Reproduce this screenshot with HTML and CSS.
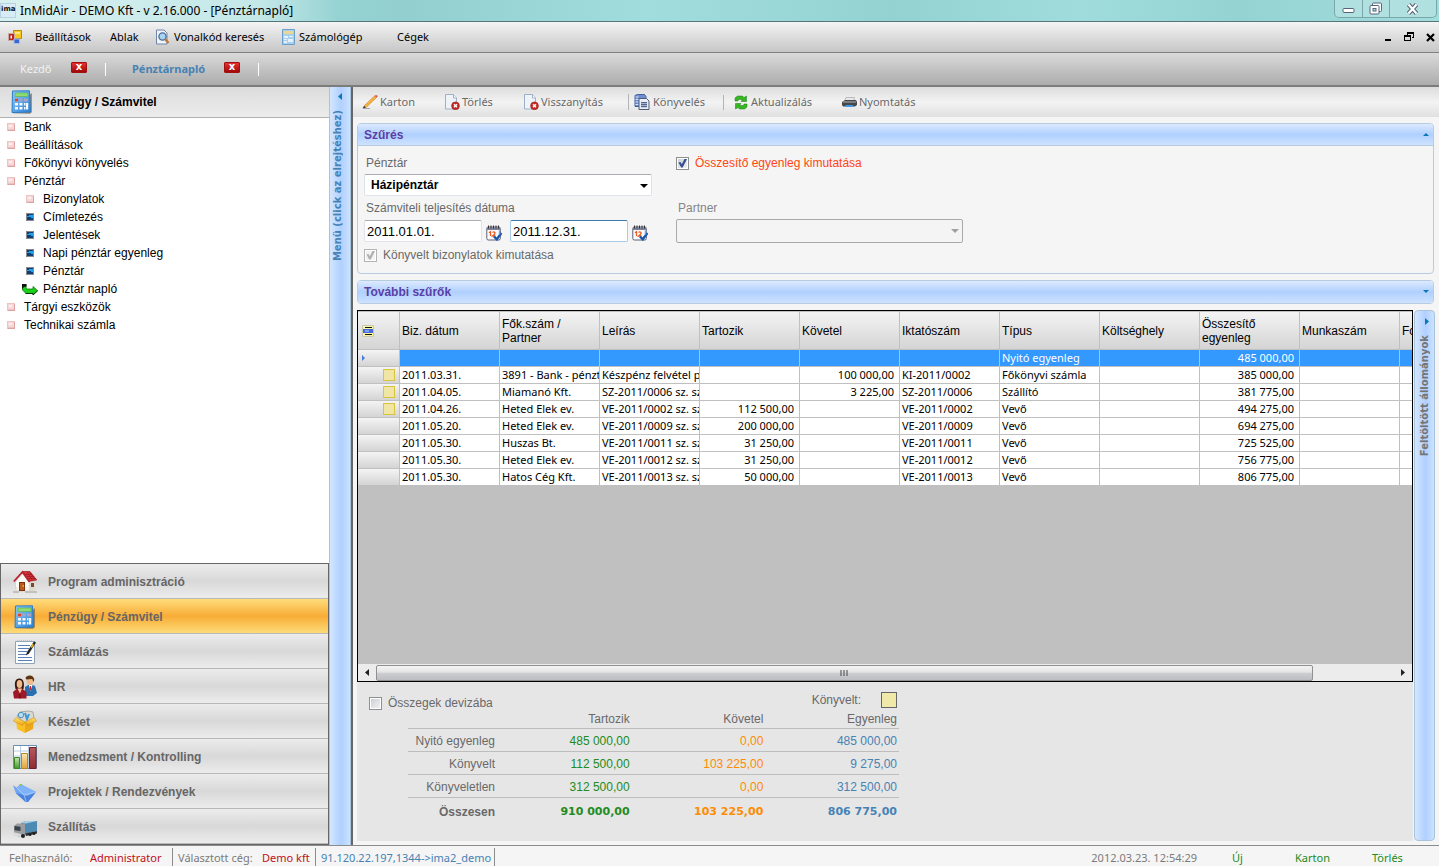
FILE: index.html
```
<!DOCTYPE html>
<html lang="hu">
<head>
<meta charset="utf-8">
<title>InMidAir - DEMO Kft - v 2.16.000 - [Pénztárnapló]</title>
<link rel="stylesheet" href="styles.css">
</head>
<body>
<svg class="defs" aria-hidden="true">
  <defs>
    <linearGradient id="blue" x1="0" y1="0" x2="1" y2="1"><stop offset="0" stop-color="#8accf8"/><stop offset="1" stop-color="#2a80d8"/></linearGradient>
    <linearGradient id="gold" x1="0" y1="0" x2="0" y2="1"><stop offset="0" stop-color="#ffe36a"/><stop offset="1" stop-color="#f0a010"/></linearGradient>
    <linearGradient id="green" x1="0" y1="0" x2="0" y2="1"><stop offset="0" stop-color="#c4e6a8"/><stop offset="1" stop-color="#3f9a2c"/></linearGradient>
    <linearGradient id="amber" x1="0" y1="0" x2="0" y2="1"><stop offset="0" stop-color="#fbe7ae"/><stop offset="1" stop-color="#e0a23c"/></linearGradient>
    <linearGradient id="wine" x1="0" y1="0" x2="0" y2="1"><stop offset="0" stop-color="#b9585c"/><stop offset="1" stop-color="#8e2c30"/></linearGradient>
    <symbol id="i-calc" viewBox="0 0 24 24">
      <path d="M3 23.200 20 23.800l1.800-1.500V3z" fill="#5f5a50" opacity=".7"/>
      <path d="M2.500 1 19.500.8 20.400 22 2 22.600z" fill="url(#blue)" stroke="#2f7cc4"/>
      <path d="M5 3h13v3.500H5z" fill="#8fdc72" stroke="#5cae4c" stroke-width=".6"/>
      <path d="M5 8.500h3v3H5zM5 13h3v2.500H5zM5 17h3v2.500H5zM9.500 13h3v2.500h-3zM9.500 17h3v2.500h-3zM14 13h1.500v2.500H14zM14 17h1.500v2.500H14zM16 13h2.200v6.500H16z" fill="#f6faff"/>
      <path d="M5 8.500h3v3H5z" fill="#e0432c"/><path d="M9.500 8.500h3v3h-3zM14 8.500h4v3h-4z" fill="#a9a4c4"/>
    </symbol>
    <symbol id="i-doc-x" viewBox="0 0 16 16">
      <path d="M1.500.5h8L12.500 4v11h-11z" fill="#eef3fa" stroke="#9db0c8"/><path d="M9.500.5V4h3" fill="#fff" stroke="#9db0c8"/>
      <circle cx="11.500" cy="11.800" r="3.900" fill="#c92a26" stroke="#8c1512" stroke-width=".6"/>
      <path d="M10 10.300l3 3M13 10.300l-3 3" stroke="#fff" stroke-width="1.400"/>
    </symbol>
    <symbol id="i-cal" viewBox="0 0 16 16">
      <rect x=".8" y="2" width="13.500" height="13" rx="1.500" fill="#fafbff" stroke="#5c6078"/>
      <path d="M1 2.500h13V5H1z" fill="#80849a"/>
      <path d="M2.500.5v3M5 .5v3M7.500.5v3M10 .5v3M12.500.5v3" stroke="#333" stroke-width="1"/>
      <path d="M3 7.800 4.500 6.800V11M6.500 7.500c1.500-1.500 3.500 0 2 1.700L6.500 11H9.500" fill="none" stroke="#ec5a1c" stroke-width="1.300"/>
      <path d="M8 11.500l2.800 2.800L15.500 8" fill="none" stroke="#1c56a8" stroke-width="2.400"/>
      <path d="M13.500 5.500v4" stroke="#7ea2da" stroke-width="1.500"/>
    </symbol>
    <symbol id="i-node" viewBox="0 0 8 8"><path d="M0 0h8v8H0z" fill="#ecc4c4"/><path d="M1 1h6v5H1z" fill="#f6d8d8"/><path d="M2 2h3v2H2z" fill="#fdf0f0"/><path d="M7 1h1v7H1V7h6z" fill="#dfa3a3"/></symbol>
    <symbol id="i-leaf" viewBox="0 0 8 8"><path d="M0 0h8v8H0z" fill="#8a8a8a"/><path d="M1 1h6v6H1z" fill="#0e3f78"/><path d="M1 3h2V2h4v3H5V4H1z" fill="#22a0e8"/></symbol>
  </defs>
</svg>

<div class="app">
  <header class="titlebar">
    <span class="logo">ima</span>
    <h1 class="title">InMidAir - DEMO Kft - v 2.16.000 - [Pénztárnapló]</h1>
    <div class="winbtns">
      <button aria-label="Kis méret"><svg width="14" height="12"><rect x="1" y="5.500" width="11" height="4" rx="1" fill="#fff" stroke="#57657a"/></svg></button>
      <button aria-label="Előző méret"><svg width="14" height="14"><rect x="3.500" y="1" width="9" height="8.500" rx="1" fill="#fff" stroke="#57657a"/><rect x="1" y="3.500" width="9" height="8.500" rx="1" fill="#fff" stroke="#57657a"/><rect x="4" y="6.500" width="3" height="2.500" fill="#a5dcdc" stroke="#57657a"/></svg></button>
      <button class="wide" aria-label="Bezárás"><svg width="14" height="12"><path d="M2.500 1.500 6.500 6l4-4.500M2.500 10.500 6.500 6l4 4.500" fill="none" stroke="#57657a" stroke-width="4.400"/><path d="M2.500 1.500 6.500 6l4-4.500M2.500 10.500 6.500 6l4 4.500" fill="none" stroke="#fff" stroke-width="2.200"/></svg></button>
    </div>
  </header>

  <nav class="menubar" aria-label="Főmenü">
    <svg width="14" height="14" viewBox="0 0 14 14"><path d="M5.500.5h8v8h-8z" fill="#f6c81c" stroke="#b88a10"/><path d="M7 2h5v2H7z" fill="#fce88c"/><path d="M.5 3.500h6v7h-6z" fill="#c0241a" stroke="#c8a8a0"/><path d="M2.500 5.500H4v3H2.500z" fill="#fff"/><path d="M6 9h5.500v4.500H6z" fill="#3868d0" stroke="#a8bcec"/></svg>
    <button>Beállítások</button>
    <button>Ablak</button>
    <button><svg width="15" height="16" viewBox="0 0 15 16"><path d="M1.500 1H9l3 3v11H1.500z" fill="#f0f5fc" stroke="#6f86a8"/><circle cx="7.500" cy="7.500" r="3.600" fill="#a8d4f4" stroke="#4a6a98" stroke-width="1.300"/><path d="M10 10l3.500 4" stroke="#c07a38" stroke-width="2.400"/></svg>Vonalkód keresés</button>
    <button><svg width="13" height="16" viewBox="0 0 13 16"><path d="M.5.500h12v15H.5z" fill="#a8d0ee" stroke="#6ba0cc"/><path d="M2 2h9v3H2z" fill="#e8d898"/><path d="M2 7h4v2H2zM7 7h4v1H7zM2 10h3v1H2zM6 10h5v3H6zM2 12h3v2H2z" fill="#e4f2fc"/></svg>Számológép</button>
    <button>Cégek</button>
    <div class="mdi">
      <button aria-label="Ablak kis méret"><svg width="8" height="10"><path d="M1 7h6v2H1z"/></svg></button>
      <button aria-label="Ablak visszaállítása"><svg width="10" height="10"><path d="M3 0h7v6H8V5h1V2H4v1H3zM0 3h7v6H0zm1 2v3h5V5z" fill-rule="evenodd"/></svg></button>
      <button aria-label="Ablak bezárása"><svg width="9" height="9"><path d="M1 1l7 7M8 1L1 8" stroke="#000" stroke-width="2.200"/></svg></button>
    </div>
  </nav>

  <div class="tabs">
    <button class="tab">Kezdő</button><button class="x" aria-label="Kezdő bezárása">x</button><i></i>
    <button class="tab active">Pénztárnapló</button><button class="x" aria-label="Pénztárnapló bezárása">x</button><i></i>
  </div>

  <div class="main">
    <aside class="sidebar">
      <h2 class="side-head"><svg width="24" height="24"><use href="#i-calc"/></svg>Pénzügy / Számvitel</h2>
      <ul class="tree">
        <li><svg width="8" height="8"><use href="#i-node"/></svg>Bank</li>
        <li><svg width="8" height="8"><use href="#i-node"/></svg>Beállítások</li>
        <li><svg width="8" height="8"><use href="#i-node"/></svg>Főkönyvi könyvelés</li>
        <li><svg width="8" height="8"><use href="#i-node"/></svg>Pénztár</li>
        <li class="sub"><svg width="8" height="8"><use href="#i-node"/></svg>Bizonylatok</li>
        <li class="sub"><svg width="8" height="8"><use href="#i-leaf"/></svg>Címletezés</li>
        <li class="sub"><svg width="8" height="8"><use href="#i-leaf"/></svg>Jelentések</li>
        <li class="sub"><svg width="8" height="8"><use href="#i-leaf"/></svg>Napi pénztár egyenleg</li>
        <li class="sub"><svg width="8" height="8"><use href="#i-leaf"/></svg>Pénztár</li>
        <li class="sub"><svg width="16" height="13" viewBox="0 0 16 13"><path d="M.5 1.500H4V5l1.500 1H11V3.500l4.500 4-4.500 4v-1H4L.5 7z" fill="#18d018" stroke="#0a7c0a" stroke-width=".8"/><path d="M0 1h4.500v2.500L2 4 0 6z" fill="#111"/><path d="M3.500 10.500H11V12l4.800-4.300" fill="none" stroke="#063806"/></svg>Pénztár napló</li>
        <li><svg width="8" height="8"><use href="#i-node"/></svg>Tárgyi eszközök</li>
        <li><svg width="8" height="8"><use href="#i-node"/></svg>Technikai számla</li>
      </ul>
      <nav class="modules" aria-label="Modulok">
        <button><svg width="24" height="24" viewBox="0 0 24 24"><path d="M3 11h17v10H3z" fill="#f8f5ee" stroke="#c8c4bc" stroke-width=".6"/><path d="M3 12l6.500-7.500 6 7.500v5H3z" fill="#fbf9f4"/><path d="M16 11l2-2 4 2v10h-6z" fill="#dedad2"/><path d="M6 12h6v9H6z" fill="#7a3210"/><path d="M7 13h4v7H7z" fill="#b85a18"/><circle cx="10.200" cy="16" r=".8" fill="#ffd840"/><path d="M18 13h3v4h-3z" fill="#7a4a2c"/><path d="M9.500 1.500H17L23.800 10l-7 1.200z" fill="#d83038" stroke="#8c1418" stroke-width=".6"/><path d="M.8 11.500 9.500 2 16.500 12" fill="none" stroke="#b8222a" stroke-width="1.800"/><path d="M12 4.500h7M14 6.500h7M15.500 8.500h7M14 1.500l5.500 9M16.500 2l6 8" stroke="#901820" stroke-width=".6"/><path d="M0 21h6v2H0zM12 21h12v2H12z" fill="#c4c0ba"/></svg>Program adminisztráció</button>
        <button class="on"><svg width="24" height="24"><use href="#i-calc"/></svg>Pénzügy / Számvitel</button>
        <button><svg width="24" height="24" viewBox="0 0 24 24"><path d="M2.500 1.500h19v22h-19z" fill="#fbfdff" stroke="#8fa3b8"/><path d="M4 .8h16" stroke="#b0b8c0" stroke-dasharray="1 1"/><path d="M5 5.500h12M5 8.500h11M5 11.500h9M5 14.500h9M5 17.500h14M5 20.500h14" stroke="#5b80bc"/><path d="M13 15.500l1-3.500L21 1.500l2 1-7 11z" fill="#222"/><path d="M17.500 7l2-3.200 1.500 1L19 8z" fill="#e8b820"/></svg>Számlázás</button>
        <button><svg width="24" height="24" viewBox="0 0 24 24"><path d="M12 12l5-3 5 2 2 7-4 3h-8z" fill="#2870b0"/><path d="M16 10l1.500 6L19.500 10z" fill="#fff"/><path d="M17 11h1l.5 4h-1.500z" fill="#c82828"/><ellipse cx="17" cy="5.500" rx="3.600" ry="4.500" fill="#f0bc8c"/><path d="M12.500 3c1-3.500 8.500-3.500 8.800 2l-1 2-1-3-6 .5z" fill="#5c3614"/><path d="M2.500 14C1 8 2 3.500 6.500 3.500S11.500 9 10.500 14z" fill="#3a180c"/><ellipse cx="6.500" cy="9" rx="2.800" ry="4" fill="#f0bc8c"/><path d="M0 17l4-3.500h5l4.500 3.500v6.500H1z" fill="#a01828"/><path d="M4.500 13.500 7 18.500l2-5z" fill="#f4c8a0"/><path d="M7 18.500v5" stroke="#5c0c14"/></svg>HR</button>
        <button><svg width="24" height="24" viewBox="0 0 24 24"><path d="M4 6l3-4 9-1 4 1 1 6-9 5z" fill="#d8d8cc" stroke="#888880" stroke-width=".6"/><circle cx="8" cy="5" r="2.700" fill="#b8e0f4" stroke="#5090c0"/><path d="M12 3l2 6 2-5" fill="none" stroke="#3898d8" stroke-width="2"/><path d="M3 9l9 3v11L4 19z" fill="#f8c024"/><path d="M21 9l-9 3v11l8-4z" fill="#eca818"/><path d="M3 7.500l9 4.500-2.500 3.500L.5 11zM21 7.500 12 12l2.500 3.500 9-4.500z" fill="url(#gold)" stroke="#c88c18" stroke-width=".5"/></svg>Készlet</button>
        <button><svg width="24" height="24" viewBox="0 0 24 24"><path d="M.5.500h23v23H.5z" fill="#fff" stroke="#6890b8"/><path d="M1 6h22M1 11h22M7.500 1v22M15.500 1v22" stroke="#b8cce0"/><path d="M1.500 12.500h5v11h-5z" fill="url(#green)" stroke="#3c8428"/><path d="M8.500 8.500h6v15h-6z" fill="url(#amber)" stroke="#b88428"/><path d="M16.500 2.500h6.500v21h-6.500z" fill="url(#wine)" stroke="#702024"/></svg>Menedzsment / Kontrolling</button>
        <button><svg width="24" height="24" viewBox="0 0 24 24"><path d="M0 5l4 3 3-4 16 8-8 10-3-.5-9-8z" fill="#6fa4f2"/><path d="M3 8l5-4 15 8-5 4-8-1z" fill="#7fb2f8"/><path d="M3 13l9 8.500 3 .5 8-10-9 4z" fill="#4a82de"/><path d="M4 8l7 7 12-3M11 15l2 6" fill="none" stroke="#b8d4ff" stroke-width=".7"/><circle cx="8" cy="5" r="1" fill="#88cc30"/></svg>Projektek / Rendezvények</button>
        <button><svg width="24" height="24" viewBox="0 0 24 24"><path d="M8 8l4-2h12v10l-12 3z" fill="#4c8ab4"/><path d="M8 8l4-2h12l-11 2.500z" fill="#a4cce4"/><path d="M1 11l3-2.500h8v12l-5 1.500-6-2z" fill="#9a9c9e"/><path d="M1.500 11l6 .8V16l-6-.8z" fill="#38444c"/><path d="M0 17l8 2v3L1 20.500z" fill="#d8dadc"/><path d="M12 18.500l12-2.500v2.500L13 21z" fill="#30343a"/><circle cx="10" cy="21" r="2" fill="#222"/><circle cx="17" cy="19.500" r="1.500" fill="#222"/><circle cx="21" cy="18.500" r="1.500" fill="#222"/></svg>Szállítás</button>
      </nav>
    </aside>

    <button class="vstrip vstrip-left"><svg width="4" height="7"><path d="M4 0v7L0 3.500z" fill="#0a78b8"/></svg><span>Menü (click az elrejtéshez)</span></button>

    <main class="content">
      <div class="toolbar">
        <button><svg width="16" height="14" viewBox="0 0 16 14"><path d="M2 11 12.500 1l2 1.500L4 12.500z" fill="#f8b440" stroke="#c07c20" stroke-width=".6"/><path d="M12.500 1l2 1.500L16 1 14 0z" fill="#e05050"/><path d="M2 11l2 1.500L.5 13.500z" fill="#333"/><path d="M1 13.500h7" stroke="#999" stroke-width=".8"/></svg>Karton</button>
        <button><svg width="16" height="16"><use href="#i-doc-x"/></svg>Törlés</button>
        <button><svg width="16" height="16"><use href="#i-doc-x"/></svg>Visszanyítás</button>
        <button class="sep"><svg width="16" height="16" viewBox="0 0 16 16"><path d="M1 1.500 3.500.5h7l1.500 2v10H1z" fill="#6d8fd0" stroke="#44609c"/><path d="M1.500 3h3M1.500 5.500h3M1.500 8h3M1.500 10.500h3" stroke="#dce8fc"/><path d="M5 4.500h7.500L15 7v8.500H5z" fill="#e8eef8" stroke="#505c78"/><path d="M7 8h6v5.500H7z" fill="#a4b4d0"/><path d="M7 8.500h6M7 10.500h6M7 12.500h6" stroke="#53678c"/></svg>Könyvelés</button>
        <button class="sep far"><svg width="14" height="15" viewBox="0 0 14 15"><path d="M1 6V3l2.500-2h5l1.500 1.500L12.500 1v5.500H7L8.500 4.500h-4L4 6z" fill="#38b820" stroke="#187818" stroke-width=".5"/><path d="M13 9v3L10.500 14h-5L4 12.500 1.500 14V8.500H7L5.500 10.500h4L10 9z" fill="#38b820" stroke="#187818" stroke-width=".5"/></svg>Aktualizálás</button>
        <button><svg width="15" height="12" viewBox="0 0 15 12"><path d="M4 1.500h8.500l-.5 3H3z" fill="#e8e8e8" stroke="#a8a8a8" stroke-width=".7"/><path d="M0 6 3 4h11l1 2v3l-2 1.500H1L0 9z" fill="#46484a"/><path d="M1 6h13" stroke="#b0b4b8"/><path d="M3.500 9h7.500l-.5 2H4z" fill="#3c98e8"/></svg>Nyomtatás</button>
      </div>

      <section class="panel">
        <h2 class="panel-head">Szűrés<svg width="6" height="4"><path d="M0 3h6L3 0z" fill="#0a78b8"/></svg></h2>
        <form class="filters">
          <div class="col">
            <label for="penztar">Pénztár</label>
            <span class="drop"><select id="penztar"><option>Házipénztár</option></select></span>
            <label for="tol">Számviteli teljesítés dátuma</label>
            <div class="dates">
              <input id="tol" type="text" value="2011.01.01.">
              <button type="button" aria-label="Kezdő dátum"><svg width="16" height="16"><use href="#i-cal"/></svg></button>
              <input class="focus" type="text" value="2011.12.31." aria-label="Záró dátum">
              <button type="button" aria-label="Záró dátum választása"><svg width="16" height="16"><use href="#i-cal"/></svg></button>
            </div>
            <label class="check"><input type="checkbox" checked disabled>Könyvelt bizonylatok kimutatása</label>
          </div>
          <div class="col">
            <label class="check hot"><input type="checkbox" checked>Összesítő egyenleg kimutatása</label>
            <label class="dim partner" for="partner">Partner</label>
            <span class="drop off"><select id="partner" disabled><option></option></select></span>
          </div>
        </form>
      </section>

      <section class="panel folded">
        <h2 class="panel-head">További szűrők<svg width="6" height="4"><path d="M0 0h6L3 3z" fill="#0a78b8"/></svg></h2>
      </section>

      <div class="work">
        <div class="left">
          <div class="grid">
            <div class="rows">
              <table class="data">
                <colgroup><col class="c0"><col><col><col><col><col><col><col><col><col><col><col></colgroup>
                <thead><tr>
                  <th><svg width="12" height="12" viewBox="0 0 12 12"><path d="M0 0h12v12H0z" fill="#fcf6a0"/><path d="M0 4h12v4H0z" fill="#4468e0"/><path d="M.5.500h11v11H.5z" fill="none" stroke="#c8c8b0"/><path d="M3 2.500h7M3 9.500h7" stroke="#111"/><path d="M3 6h4" stroke="#c8d8ff"/></svg></th>
                  <th>Biz. dátum</th><th>Fők.szám / Partner</th><th>Leírás</th><th>Tartozik</th><th>Követel</th><th>Iktatószám</th><th>Típus</th><th>Költséghely</th><th>Összesítő egyenleg</th><th>Munkaszám</th><th>Fo</th>
                </tr></thead>
                <tbody>
                  <tr class="sel"><th><svg width="4" height="6"><path d="M0 0v6l3-3z" fill="#4a7ad8"/></svg></th><td></td><td></td><td></td><td></td><td></td><td></td><td>Nyitó egyenleg</td><td></td><td class="n">485 000,00</td><td></td><td></td></tr>
                  <tr><th><i class="mark"></i></th><td>2011.03.31.</td><td>3891 - Bank - pénztár</td><td>Készpénz felvétel pénztár</td><td></td><td class="n">100 000,00</td><td>KI-2011/0002</td><td>Főkönyvi számla</td><td></td><td class="n">385 000,00</td><td></td><td></td></tr>
                  <tr><th><i class="mark"></i></th><td>2011.04.05.</td><td>Miamanó Kft.</td><td>SZ-2011/0006 sz. számla</td><td></td><td class="n">3 225,00</td><td>SZ-2011/0006</td><td>Szállító</td><td></td><td class="n">381 775,00</td><td></td><td></td></tr>
                  <tr><th><i class="mark"></i></th><td>2011.04.26.</td><td>Heted Elek ev.</td><td>VE-2011/0002 sz. számla</td><td class="n">112 500,00</td><td></td><td>VE-2011/0002</td><td>Vevő</td><td></td><td class="n">494 275,00</td><td></td><td></td></tr>
                  <tr><th></th><td>2011.05.20.</td><td>Heted Elek ev.</td><td>VE-2011/0009 sz. számla</td><td class="n">200 000,00</td><td></td><td>VE-2011/0009</td><td>Vevő</td><td></td><td class="n">694 275,00</td><td></td><td></td></tr>
                  <tr><th></th><td>2011.05.30.</td><td>Huszas Bt.</td><td>VE-2011/0011 sz. számla</td><td class="n">31 250,00</td><td></td><td>VE-2011/0011</td><td>Vevő</td><td></td><td class="n">725 525,00</td><td></td><td></td></tr>
                  <tr><th></th><td>2011.05.30.</td><td>Heted Elek ev.</td><td>VE-2011/0012 sz. számla</td><td class="n">31 250,00</td><td></td><td>VE-2011/0012</td><td>Vevő</td><td></td><td class="n">756 775,00</td><td></td><td></td></tr>
                  <tr><th></th><td>2011.05.30.</td><td>Hatos Cég Kft.</td><td>VE-2011/0013 sz. számla</td><td class="n">50 000,00</td><td></td><td>VE-2011/0013</td><td>Vevő</td><td></td><td class="n">806 775,00</td><td></td><td></td></tr>
                </tbody>
              </table>
            </div>
            <div class="scroll">
              <button aria-label="Balra"><svg width="4" height="7"><path d="M4 0v7L0 3.500z" fill="#222"/></svg></button>
              <div class="track"><div class="thumb"><svg width="8" height="6"><path d="M1 0v6M4 0v6M7 0v6" stroke="#444"/></svg></div></div>
              <button aria-label="Jobbra"><svg width="4" height="7"><path d="M0 0v7l4-3.500z" fill="#222"/></svg></button>
            </div>
          </div>

          <div class="summary">
            <label class="check"><input type="checkbox">Összegek devizába</label>
            <div class="legend">Könyvelt:<i></i></div>
            <table class="totals">
              <thead><tr><td></td><th>Tartozik</th><th>Követel</th><th>Egyenleg</th></tr></thead>
              <tbody>
                <tr><th>Nyitó egyenleg</th><td class="g">485 000,00</td><td class="o">0,00</td><td class="b">485 000,00</td></tr>
                <tr><th>Könyvelt</th><td class="g">112 500,00</td><td class="o">103 225,00</td><td class="b">9 275,00</td></tr>
                <tr><th>Könyveletlen</th><td class="g">312 500,00</td><td class="o">0,00</td><td class="b">312 500,00</td></tr>
              </tbody>
              <tfoot><tr><th>Összesen</th><td class="g">910 000,00</td><td class="o">103 225,00</td><td class="b">806 775,00</td></tr></tfoot>
            </table>
          </div>
        </div>
        <button class="vstrip vstrip-right"><svg width="4" height="7"><path d="M0 0v7l4-3.500z" fill="#0a78b8"/></svg><span>Feltöltött állományok</span></button>
      </div>
    </main>
  </div>

  <footer class="status">
    <span>Felhasználó:</span><span class="red">Administrator</span>
    <span class="bar">Választott cég:</span><span class="red">Demo kft</span>
    <span class="bar blue">91.120.22.197,1344-&gt;ima2_demo</span><span class="bar"></span>
    <span class="date">2012.03.23. 12:54:29</span>
    <button>Új</button><button>Karton</button><button>Törlés</button>
  </footer>
</div>
</body>
</html>
```

FILE: styles.css
```
* { box-sizing: border-box; }
body { margin: 0; font-family: "Liberation Sans", Arial, sans-serif; font-size: 12px; line-height: 14px; color: #000; }
button { margin: 0; padding: 0; border: 0; background: none; font: inherit; color: inherit; text-align: left; white-space: nowrap; }
h1, h2, ul { margin: 0; padding: 0; font-size: 12px; font-weight: normal; list-style: none; }
svg { display: block; flex: none; }
.defs { position: absolute; width: 0; height: 0; }

.app { display: grid; grid-template-rows: 22px 31px 34px minmax(0, 1fr) 20px; height: 100vh; overflow: hidden; background: #f5f5f5; }
.titlebar, .menubar, .tabs, .toolbar, .status { font-family: "Noto Sans", "Open Sans", sans-serif; font-size: 11px; line-height: 16px; }

/* Title bar */
.titlebar { display: flex; align-items: center; gap: 4px; border-bottom: 1px solid #56757a; background: linear-gradient(90deg, #d8f0f0 0, #c4e8e8 260px, #95d2d2 340px, #93cfcf 28%, #a2dddd 45%, #94d2d2 62%, #a0dcdc 75%, #95d3d3 86%, #a2dcdc 100%); }
.logo { width: 16px; height: 15px; border: 1px solid #b8d4e4; background: #d8ecf8; color: #111; font: bold 7px/11px "DejaVu Sans", sans-serif; text-align: center; }
.winbtns { display: flex; align-self: flex-start; height: 18px; margin: 0 2px 0 auto; border: 1px solid #7aa8aa; border-top: 0; border-radius: 0 0 5px 5px; background: #b0e0e0; }
.winbtns button { display: flex; align-items: center; justify-content: center; width: 27px; }
.winbtns button + button { border-left: 1px solid #7aa8aa; }
.winbtns .wide { width: 47px; }

/* Menu bar */
.menubar { display: grid; grid-template-columns: 27px 75px 45px 127px 115px 60px 1fr; align-items: center; padding: 0 4px 0 8px; border-bottom: 1px solid #808080; background: linear-gradient(#f4f4f4, #c6c6c6); }
.menubar > button { display: flex; align-items: center; gap: 4px; }
.mdi { display: flex; justify-content: flex-end; align-items: center; gap: 12px; }

/* Document tabs */
.tabs { display: grid; grid-template-columns: 51px 34px 27px 92px 34px 1fr; align-items: center; padding: 0 0 0 20px; border-bottom: 2px solid #7c7c7c; background: linear-gradient(#dadada, #acacac); }
.tab { color: #f2f2f2; }
.tab.active { color: #4682b4; font-weight: bold; }
.tabs i { width: 1px; height: 13px; background: #fff; }
.x { width: 16px; height: 11px; margin-bottom: 4px; border: 1px solid #a01010; border-radius: 1px; background: linear-gradient(#e83030, #a00808); color: #fff; font: bold 10px/8px "DejaVu Sans", sans-serif; text-align: center; }

.main { display: grid; grid-template-columns: 329px 22px minmax(0, 1fr); min-height: 0; border-bottom: 1px solid #8c8c8c; }

/* Sidebar */
.sidebar { display: flex; flex-direction: column; min-height: 0; background: #fff; }
.side-head { display: flex; align-items: center; gap: 8px; flex: none; height: 31px; padding-left: 10px; border-bottom: 1px solid #b0b0b0; background: linear-gradient(#dcdcdc, #ececec); font-weight: bold; }
.tree { flex: 1; }
.tree li { display: grid; grid-template-columns: 8px 1fr; align-items: center; gap: 9px; height: 18px; padding-left: 7px; }
.tree .sub { grid-template-columns: 16px 1fr; gap: 5px; padding-left: 22px; }
.tree .sub svg { justify-self: center; }
.modules { display: flex; flex-direction: column; flex: none; border: 1px solid #666; }
.modules button { display: flex; align-items: center; gap: 11px; height: 35px; padding: 1px 0 0 12px; border-bottom: 1px solid #b8b8b8; background: linear-gradient(#ececec, #d8d8d8 50%, #ececec); color: #666; font-weight: bold; }
.modules .on { background: linear-gradient(#fedd7c, #f8ac36 50%, #fddb78); }

/* Vertical strips */
.vstrip { display: flex; flex-direction: column; align-items: center; border: 1px solid #a8c4dc; border-width: 0 1px; background: linear-gradient(90deg, #d4e6ff, #b0d0ff 55%, #cce2ff); font: bold 10px/14px "DejaVu Sans", sans-serif; }
.vstrip svg { margin-left: 4px; }
.vstrip span { writing-mode: vertical-rl; transform: rotate(180deg); }
.vstrip-left { gap: 10px; padding: 6px 4px 0 0; color: #4682b4; }
.vstrip-right { gap: 10px; padding-top: 7px; border-width: 1px; border-radius: 4px; color: #757575; }

/* Content */
.content { display: flex; flex-direction: column; min-width: 0; min-height: 0; border-left: 2px solid #666; }
.toolbar { display: grid; grid-template-columns: 82px 79px 105px 95px 119px 1fr; align-items: center; height: 30px; flex: none; padding-left: 9px; background: linear-gradient(#dcdcdc, #f3f3f3 50%, #e0e0e0); color: #696969; }
.toolbar button { display: flex; align-items: center; gap: 2px; }
.toolbar .sep { gap: 3px; padding-left: 5px; border-left: 1px solid #b4b4b4; line-height: 14px; }
.toolbar .far { padding-left: 10px; }
.panel { flex: none; margin: 6px 5px 0 4px; border: 1px solid #b8cce0; border-radius: 4px; background: #f5f5f5; }
.panel-head { display: flex; justify-content: space-between; align-items: center; height: 22px; padding: 0 4px 0 6px; border-bottom: 1px solid #b8cce0; border-radius: 3px 3px 0 0; background: linear-gradient(#dceaff, #b0d0ff 50%, #cee2ff); color: #5b3fa6; font-weight: bold; }
.folded .panel-head { border: 0; border-radius: 3px; }
.filters { display: grid; grid-template-columns: 288px 287px; gap: 24px; padding: 8px 6px 7px; color: #696969; }
.col { display: grid; grid-template-rows: 18px 24px 20px 24px 22px; align-content: start; row-gap: 1px; align-items: center; }
.col > label { padding-left: 2px; }
.col > .partner { grid-row: 3; }
.col > .off { grid-row: 4; }
.col > .check { padding: 0; }
.drop { position: relative; display: block; }
.drop select { display: block; width: 100%; height: 22px; padding: 0 6px; appearance: none; border: 1px solid #dfe3ea; border-top-color: #abadb3; border-radius: 2px; background: #fff; color: #000; opacity: 1; font: bold 12px/14px "Liberation Sans", Arial, sans-serif; }
.drop::after { content: ""; position: absolute; right: 4px; top: 10px; border: 4px solid transparent; border-top-color: #000; border-bottom: 0; }
.drop.off select { height: 24px; border-color: #aaa; background: #f4f4f4; }
.drop.off::after { border-top-color: #a0a0a0; }
.dim { color: #868686; }
.dates { display: grid; grid-template-columns: 118px 28px 118px 24px; align-items: center; }
.dates input { width: 100%; height: 22px; padding: 0 2px; border: 1px solid #e2e3ea; border-top-color: #abadb3; border-radius: 2px; background: #fff; font: 13px/14px "Liberation Sans", Arial, sans-serif; color: #000; }
.dates .focus { border-color: #a8cbe8; border-top-color: #3d7bad; }
.dates button { padding: 4px 0 0 4px; }
.check { display: flex; align-items: center; gap: 6px; }
.check input { display: grid; place-items: center; width: 13px; height: 13px; margin: 0; appearance: none; border: 1px solid #8e8f8f; outline: 1px solid #fff; outline-offset: -2px; background: linear-gradient(135deg, #c8ccd2, #f4f4f4); }
.check input:checked::before { content: ""; width: 9px; height: 9px; background: #354f92; clip-path: polygon(5% 45%, 28% 40%, 42% 65%, 75% 0, 100% 5%, 52% 100%, 35% 100%); }
.check input:disabled { border-color: #b4b4b4; background: #f2f2f2; }
.check input:disabled::before { background: #b0b0b0; }
.hot { color: #ff4612; }

/* Work area */
.work { display: grid; grid-template-columns: minmax(0, 1fr) 21px; column-gap: 1px; flex: 1; min-height: 0; margin: 6px 4px 4px 4px; }
.left { display: flex; flex-direction: column; min-height: 0; }
.grid { display: flex; flex-direction: column; flex: 1; min-height: 0; border: 1px solid #000; background: #c0c0c0; }
.rows { flex: 1; min-height: 0; overflow: hidden; }
.data { width: 1142px; table-layout: fixed; border-collapse: separate; border-spacing: 0; font: 11px/14px "Noto Sans", sans-serif; }
.data .c0 { width: 42px; }
.data th, .data td { height: 17px; padding: 0 2px; border-right: 1px solid #c0c0c0; border-bottom: 1px solid #c0c0c0; overflow: hidden; white-space: nowrap; text-align: left; }
.data td { background: #fff; line-height: 16px; }
.data .n { padding-right: 5px; text-align: right; }
.data th { background: linear-gradient(#f4f4f4, #d4d4d4); }
.data thead th { height: 39px; border-top: 1px solid #c0c0c0; font: 12px/14px "Liberation Sans", Arial, sans-serif; white-space: normal; }
.data th:first-child { padding: 0 4px; }
.data .sel td { background: #3399ff; color: #fff; }
.mark { display: block; width: 12px; height: 12px; margin-left: auto; border: 1px solid #d8c440; background: #efe6a6; }
.scroll { display: grid; grid-template-columns: 18px 1fr 18px; height: 17px; background: #ececec; }
.scroll button { display: grid; place-items: center; }
.thumb { display: grid; place-items: center; width: 92%; height: 16px; margin-top: 1px; border: 1px solid #909090; border-radius: 2px; background: linear-gradient(#f4f4f4, #e4e4e6 45%, #cdced2 50%, #bcbdc2); }

/* Summary */
.summary { display: grid; grid-template-columns: 542px; grid-template-rows: 17px auto; align-content: start; flex: none; height: 159px; padding-top: 9px; background: #e6e6e6; color: #696969; }
.summary > * { grid-column: 1; }
.summary .check { grid-row: 1; align-self: end; justify-self: start; padding: 0 0 0 12px; height: 10px; line-height: 14px; }
.summary .check input { flex: none; }
.legend { grid-row: 1; display: flex; justify-content: flex-end; align-items: center; gap: 20px; padding-right: 2px; }
.legend i { width: 16px; height: 16px; border: 1px solid #666; background: #efe8a8; }
.totals { justify-self: end; border-collapse: collapse; table-layout: fixed; width: 491px; text-align: right; }
.totals th, .totals td { height: 23px; padding: 2px 2px 0 0; border-bottom: 1px solid #bdbdbd; font-weight: normal; text-align: right; }
.totals th:first-child { padding-right: 3px; }
.totals thead th, .totals thead td { height: 20px; }
.totals td:first-child, .totals th:first-child { width: 90px; }
.totals .g { color: #228b22; }
.totals .o { color: #ff8c00; }
.totals .b { color: #4682b4; }
.totals tfoot th, .totals tfoot td { height: 28px; border: 0; font-weight: bold; }
.totals tfoot td { font-family: "DejaVu Sans", Verdana, sans-serif; font-size: 11px; }

/* Status bar */
.status { display: grid; grid-template-columns: 81px 82px 90px 53px 179px 1fr auto 63px 77px 67px; align-items: end; padding-left: 9px; color: #7b7b7b; overflow: hidden; }
.status > * { height: 18px; line-height: 20px; white-space: nowrap; }
.status .bar { padding-left: 5px; border-left: 1px solid #8c8c8c; }
.status .red { color: #c01020; }
.status .blue { color: #4682b4; }
.status .date { padding-right: 35px; }
.status button { color: #228b22; }
```
